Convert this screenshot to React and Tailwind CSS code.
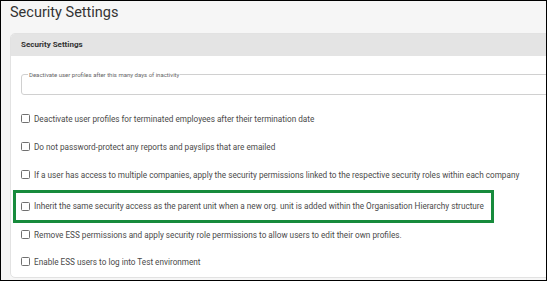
const options = [
  "Deactivate user profiles for terminated employees after their termination date",
  "Do not password-protect any reports and payslips that are emailed",
  "If a user has access to multiple companies, apply the security permissions linked to the respective security roles within each company",
];

function Check({ label }) {
  return (
    <label className="flex items-center gap-[4px]">
      <span className="h-[9px] w-[9px] shrink-0 rounded-[1.5px] border border-[#707070] bg-white" />
      <span className="whitespace-nowrap text-[8.2px] text-[#4a4a4a]">{label}</span>
    </label>
  );
}

export default function App() {
  return (
    <div className="h-[281px] w-[547px] overflow-hidden border border-black bg-[#f6f6f6] font-['Roboto',sans-serif]">
      <h1 className="ml-[9px] mt-[3px] h-[29px] text-[14.5px] leading-[18px] text-[#333]">
        Security Settings
      </h1>

      <div className="ml-[9px] mr-[-6px] overflow-hidden rounded-[5px] border border-[#e2e2e2] bg-white">
        <div className="flex h-[22px] items-center bg-[#e4e4e4] px-[10px] text-[8px] font-bold text-[#333]">
          Security Settings
        </div>

        <div className="pt-[15px]">
          <fieldset className="ml-[10px] h-[24px] rounded-[3px] border border-[#d0d0d0]">
            <legend className="ml-[6px] px-[1px] text-[6px] leading-[7px] text-[#666]">
              Deactivate user profiles after this many days of inactivity
            </legend>
          </fieldset>

          <div className="mt-[10px]">
            {options.map((o) => (
              <div key={o} className="flex h-[28px] items-center pl-[10px]">
                <Check label={o} />
              </div>
            ))}
          </div>

          <div className="ml-[2px] mt-[1px] flex h-[33px] w-[481px] items-center border-[3px] border-[#178b3c] bg-white pl-[5px]">
            <Check label="Inherit the same security access as the parent unit when a new org. unit is added within the Organisation Hierarchy structure" />
          </div>

          <div className="flex h-[24px] items-center pl-[10px]">
            <Check label="Remove ESS permissions and apply security role permissions to allow users to edit their own profiles." />
          </div>
          <div className="flex h-[30px] items-center pl-[10px]">
            <Check label="Enable ESS users to log into Test environment" />
          </div>
        </div>
      </div>
    </div>
  );
}
